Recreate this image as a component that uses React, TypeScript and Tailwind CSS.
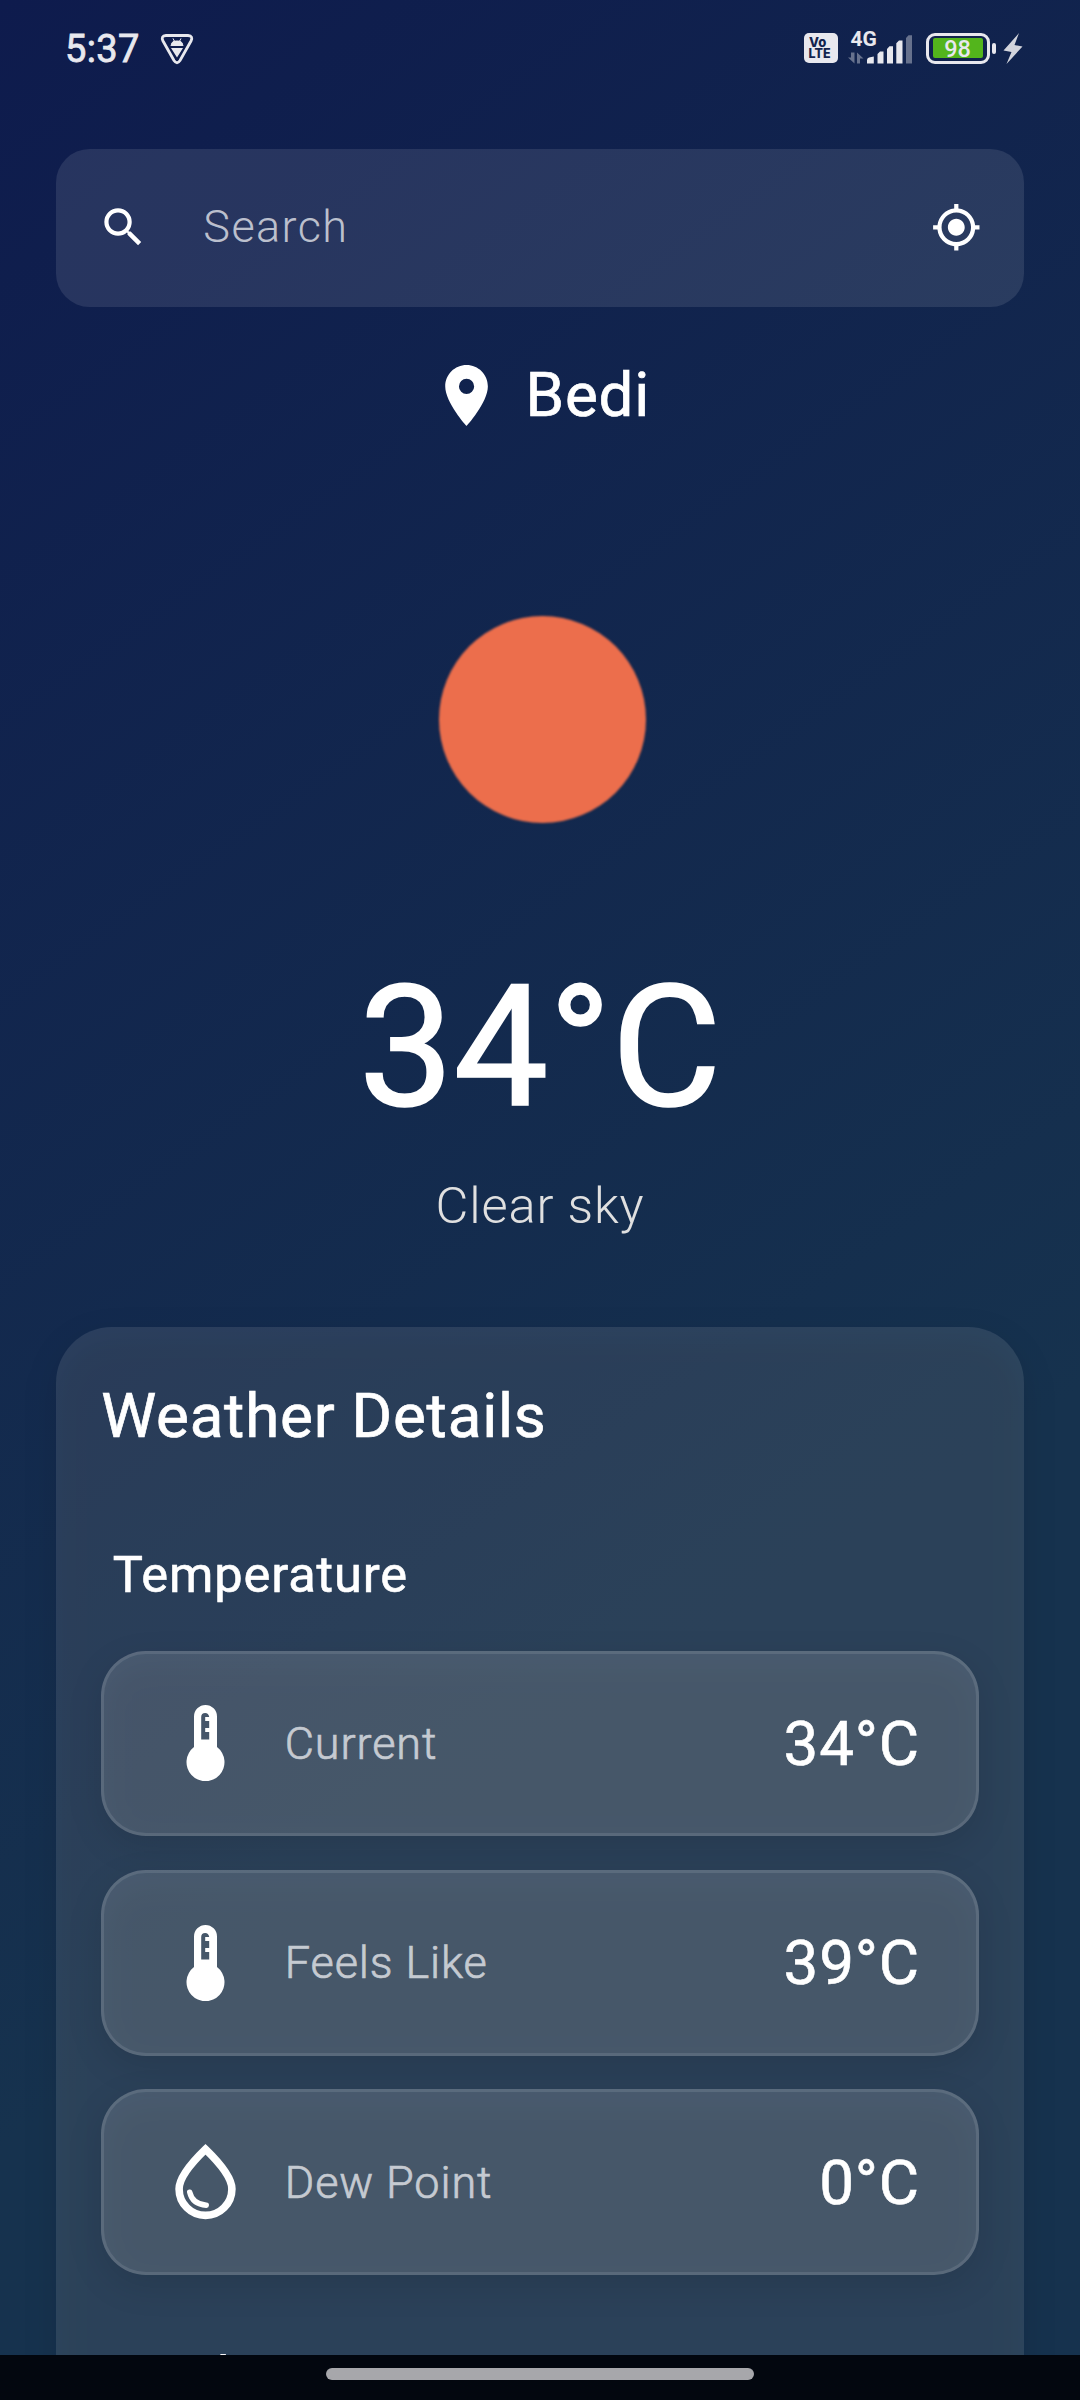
import React from "react";

function StatusBar() {
  return (
    <header className="flex h-[96px] w-full items-center pl-[65px] pr-[57px] text-[#e8e8ee]">
      <span className="mt-[2px] text-[38px] font-normal leading-[44px] tracking-[0.400px] [-webkit-text-stroke:0.800px_#e8e8ee]">5:37</span>
      <svg className="ml-[20.500px] mt-[2px]" width="34" height="32" viewBox="0 0 34 32" fill="none">
        <path d="M6 2.5H28Q33.5 3 31 8L20 27.5Q17 32 14 27.5L3 8Q0.5 3 6 2.5Z" stroke="currentColor" strokeWidth="2.8" />
        <path d="M11 13Q11.2 9 14.3 8L13 5.4M23 13Q22.8 9 19.7 8L21 5.4" stroke="currentColor" strokeWidth="1" />
        <path d="M11 13Q11.5 7.4 17 7.4T23 13ZM11 15H23L17 24.5Z" fill="currentColor" />
      </svg>
      <div className="ml-auto flex items-center">
        <div className="mr-[9.500px] flex h-[30px] w-[34px] flex-col items-start justify-center rounded-[5px] bg-[#e8e8ee] pl-[5px] font-['Inter'] text-[13px] font-extrabold leading-[12px] text-[#12234d]">
          <span>Vo</span>
          <span className="-ml-[0.500px] text-[12.500px]">LTE</span>
        </div>
        <div className="relative mr-[14px] h-[34px] w-[64px]">
          <span className="absolute left-[3px] top-[-2px] text-[21px] font-bold leading-[20px]">4G</span>
          <svg className="block" width="64" height="34" viewBox="0 0 64 34" fill="currentColor">
            <path d="M6.500 21.500V32.500L0 26.500H3V21.500ZM9 32.500V21.500L15.500 27.500H12V32.500Z" opacity="0.4" />
            <path d="M19 32.500V29Q19 27 21 26.500L25.800 25.500V32.500ZM29.500 32.500V23L32 20.500H35.500V32.500ZM39 32.500V18L41.500 15.300H45V32.500ZM48.300 32.500V12.300L51 9.500H54.500V32.500Z" />
            <path d="M58 32.500V7L60.500 4.300H64V32.500Z" opacity="0.4" />
          </svg>
        </div>
        <div className="flex h-[31px] w-[64px] items-center justify-center rounded-[9px] border-[3px] border-[#e8e8ee]">
          <div className="flex h-[20px] w-[50px] items-center justify-center rounded-[2px] bg-[#53b51c] pt-[2px] text-[23.500px] font-medium leading-[20px]">98</div>
        </div>
        <div className="ml-[2.500px] h-[11px] w-[4px] rounded-[2px] bg-[#e8e8ee]" />
        <svg className="ml-[7px]" width="20" height="31" viewBox="0 0 20 31" fill="#d3d5dd">
          <path d="M16 0L0.500 17.500L8.500 19L3.500 31L19.500 13.500L11.500 12Z" />
        </svg>
      </div>
    </header>
  );
}

function ThermometerIcon() {
  return (
    <svg width="61" height="76" viewBox="0 0 61 76" fill="#fff">
      <path
        fillRule="evenodd"
        d="M19 11.500A11.500 11.500 0 0 1 42 11.500V42.100A19 19 0 1 1 19 42.100ZM26.200 34.500H34.200V27H30.200V23H34.200V16H30.200V12H34.200Q33.500 8 30.200 8Q26.200 8 26.200 12Z"
      />
    </svg>
  );
}

function DropIcon() {
  return (
    <svg width="61" height="76" viewBox="0 0 61 76" fill="none" stroke="#fff">
      <path d="M30.500 5.300C22 13.500 4.100 31 4.100 45A26.400 26.400 0 0 0 56.900 45C56.900 31 39 13.500 30.500 5.300Z" strokeWidth="7.600" />
      <path d="M14.700 48.200Q17.500 60.500 31.300 61.200" strokeWidth="5.400" strokeLinecap="round" />
    </svg>
  );
}

function SoftShadow({ className }: { className: string }) {
  return <div className={"absolute inset-0 -z-10 translate-y-[11px] bg-black/10 blur-[16px] " + className} />;
}

type Metric = { label: string; value: string; icon: React.ReactNode };

const metrics: Metric[] = [
  { label: "Current", value: "34°C", icon: <ThermometerIcon /> },
  { label: "Feels Like", value: "39°C", icon: <ThermometerIcon /> },
  { label: "Dew Point", value: "0°C", icon: <DropIcon /> },
];

function MetricRow({ label, value, icon }: Metric) {
  return (
    <div className="relative isolate h-[185.600px]">
      <SoftShadow className="rounded-[45px]" />
      <div className="flex h-full items-center rounded-[45px] border-[3px] border-white/10 bg-white/15 pl-[70.500px] pr-[55.700px]">
        {icon}
        <span className="ml-[49px] mt-px text-[45px] font-light leading-[54px] tracking-[0.900px] text-[#c5cad1] [-webkit-text-stroke:0.700px_#c5cad1]">{label}</span>
        <span className="ml-auto mt-px text-[61.900px] font-normal leading-[72px] tracking-[0.900px] [-webkit-text-stroke:0.600px_#fff]">{value}</span>
      </div>
    </div>
  );
}

export default function App() {
  return (
    <div className="flex h-[2400px] w-[1080px] flex-col overflow-hidden bg-[linear-gradient(145deg,#0e1b4d_0%,#16324e_68%,#16324e_100%)] font-['Roboto',sans-serif] text-white">
      <StatusBar />
      <main className="flex min-h-0 flex-1 flex-col overflow-hidden px-[56.250px] pt-[53px]">
        <div className="flex h-[157.500px] shrink-0 items-center rounded-[33.750px] bg-white/10 pl-[42px] pr-[42px]">
          <svg width="50.600" height="50.600" viewBox="0 0 24 24" fill="#fff">
            <path d="M15.500 14h-.79l-.28-.27A6.471 6.471 0 0 0 16 9.500 6.500 6.500 0 1 0 9.500 16c1.610 0 3.090-.59 4.230-1.570l.27.28v.79l5 4.990L20.490 19l-4.990-5zm-6 0C7.010 14 5 11.990 5 9.500S7.010 5 9.500 5 14 7.010 14 9.500 11.990 14 9.500 14z" />
          </svg>
          <span className="-mt-[2px] ml-[54.500px] text-[45px] font-light leading-[54px] tracking-[1.400px] text-white/70">Search</span>
          <svg className="ml-auto" width="50.600" height="50.600" viewBox="0 0 24 24" fill="#fff">
            <path d="M12 8c-2.210 0-4 1.790-4 4s1.790 4 4 4 4-1.790 4-4-1.790-4-4-4zm8.940 3A8.994 8.994 0 0 0 13 3.060V1h-2v2.060A8.994 8.994 0 0 0 3.060 11H1v2h2.060A8.994 8.994 0 0 0 11 20.940V23h2v-2.060A8.994 8.994 0 0 0 20.940 13H23v-2h-2.060zM12 19c-3.870 0-7-3.130-7-7s3.130-7 7-7 7 3.130 7 7-3.130 7-7 7z" />
          </svg>
        </div>

        <div className="mt-[52.500px] flex h-[73px] shrink-0 items-center justify-center gap-[22.500px]">
          <svg width="73.100" height="73.100" viewBox="0 0 24 24" fill="#fff">
            <path d="M12 2C8.130 2 5 5.130 5 9c0 5.250 7 13 7 13s7-7.750 7-13c0-3.870-3.130-7-7-7zm0 9.500a2.500 2.500 0 0 1 0-5 2.500 2.500 0 0 1 0 5z" />
          </svg>
          <span className="text-[61.900px] font-normal leading-[73px] tracking-[0.800px] [-webkit-text-stroke:0.700px_#fff]">Bedi</span>
        </div>

        <div className="ml-[382.500px] mt-[183.500px] size-[207px] shrink-0 rounded-full bg-[#ec6e4c] blur-[0.800px]" />

        <div className="mt-[125.500px] flex h-[198px] shrink-0 items-center justify-center text-[168.750px] font-normal leading-[198px] [-webkit-text-stroke:1.700px_#fff]">34°C</div>
        <div className="mt-[30px] flex h-[60px] shrink-0 items-center justify-center text-[50.600px] font-light leading-[60px] tracking-[0.850px] text-[#e0e0e0]">Clear sky</div>

        <section className="relative isolate mt-[91.300px] h-[1200px] shrink-0">
          <SoftShadow className="rounded-[56px]" />
          <div className="h-full rounded-[56px] bg-white/10 px-[45px] pt-[53px]">
            <h2 className="h-[72px] text-[61.900px] font-normal leading-[72px] tracking-[0.800px] [-webkit-text-stroke:0.700px_#fff]">Weather Details</h2>
            <h3 className="ml-[11.500px] mt-[93px] h-[60px] text-[50.600px] font-normal leading-[60px] tracking-[0.850px] [-webkit-text-stroke:0.600px_#fff]">Temperature</h3>
            <div className="mt-[45.400px] flex flex-col gap-[33.800px]">
              {metrics.map((m) => (
                <MetricRow key={m.label} {...m} />
              ))}
            </div>
            <h3 className="ml-[11.500px] mt-[70.200px] h-[60px] text-[50.600px] font-normal leading-[60px] tracking-[0.850px] [-webkit-text-stroke:0.600px_#fff]">Wind</h3>
          </div>
        </section>
      </main>
      <footer className="flex h-[45.300px] shrink-0 justify-center bg-[#03070f] pt-[13px]">
        <div className="h-[12px] w-[428px] rounded-full bg-[#a7a7ab]" />
      </footer>
    </div>
  );
}
